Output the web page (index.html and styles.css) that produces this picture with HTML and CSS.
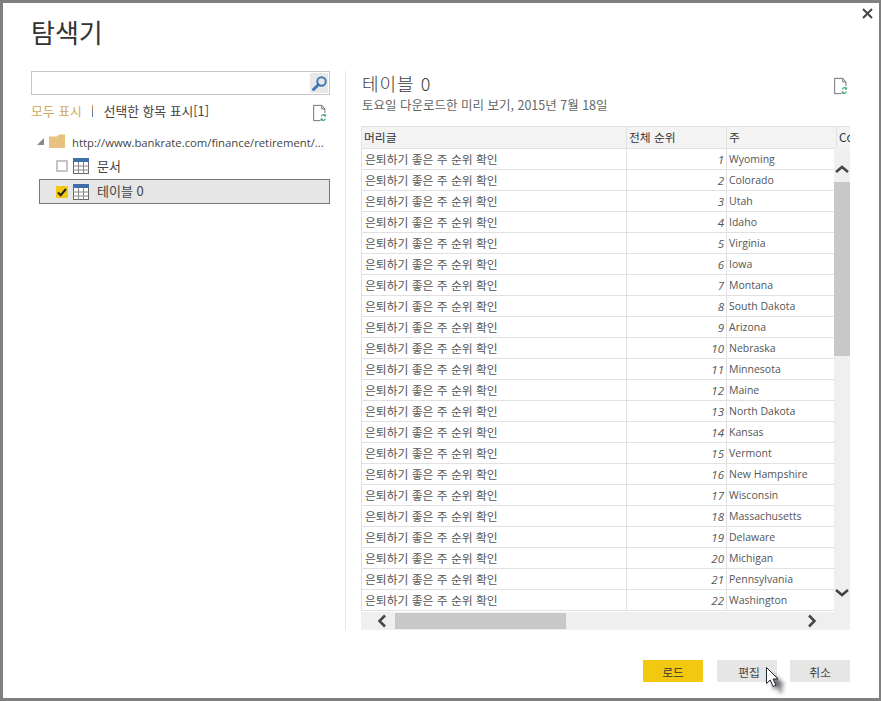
FILE: index.html
```html
<!DOCTYPE html>
<html lang="ko">
<head>
<meta charset="utf-8">
<title>탐색기</title>
<link rel="stylesheet" href="styles.css">
</head>
<body>
<div class="dialog">
  <button class="close" aria-label="닫기"><svg width="11" height="11" viewBox="0 0 11 11"><path d="M1 1l9 9M10 1l-9 9" stroke="#444" stroke-width="2" fill="none"/></svg></button>
  <h1 class="title">탐색기</h1>
  <div class="main">
    <aside class="left">
      <div class="search">
        <span class="search-btn"><svg width="17" height="17" viewBox="0 0 17 17"><circle cx="10.5" cy="6.5" r="4.2" fill="none" stroke="#3f78b5" stroke-width="2"/><path d="M7.3 9.7L2.5 14.5" stroke="#3f78b5" stroke-width="3" stroke-linecap="round"/></svg></span>
      </div>
      <div class="filter">
        <span class="f-all">모두 표시</span>
        <span class="f-sep"></span>
        <span class="f-sel">선택한 항목 표시[1]</span>
        <svg class="refresh" width="15" height="18" viewBox="0 0 16 20"><path d="M10.5 1.5H1.500V18.500H9M10.500 1.500V5.500H14V10M10.500 1.500L14 5.500" fill="none" stroke="#666" stroke-width="1"/><path d="M9.500 14a3 3 0 0 1 5-2l.8-.8v2.800h-2.800l1-1a2 2 0 0 0-3 1zM15 16a3 3 0 0 1-5 2l-.8.8V16h2.800l-1 1a2 2 0 0 0 3-1z" fill="#3d9a6a"/></svg>
      </div>
      <ul class="tree">
        <li class="node root">
          <svg class="arrow" width="7" height="7" viewBox="0 0 7 7"><path d="M7 0V7H0z" fill="#888"/></svg>
          <svg class="folder" width="16" height="14" viewBox="0 0 16 14"><path d="M0 2.500H8L10 .5H16V14H0z" fill="#e8c27f"/></svg>
          <span class="url">http://www.bankrate.com/finance/retirement/...</span>
        </li>
        <li class="node child">
          <span class="check"></span>
          <svg class="tbl" width="16" height="16" viewBox="0 0 16 16"><rect x=".5" y=".5" width="15" height="15" fill="#fff" stroke="#666"/><rect width="16" height="4" fill="#3f6fa8"/><path d="M5.500 4v12M10.500 4v12M0 8h16M0 12h16" stroke="#888"/></svg>
          <span class="label">문서</span>
        </li>
        <li class="node child selected">
          <span class="check on"><svg width="12" height="12" viewBox="0 0 12 12"><path d="M2 6.500L4.700 9.200L10 3" fill="none" stroke="#222" stroke-width="2"/></svg></span>
          <svg class="tbl" width="16" height="16" viewBox="0 0 16 16"><rect x=".5" y=".5" width="15" height="15" fill="#fff" stroke="#666"/><rect width="16" height="4" fill="#3f6fa8"/><path d="M5.500 4v12M10.500 4v12M0 8h16M0 12h16" stroke="#888"/></svg>
          <span class="label">테이블 0</span>
        </li>
      </ul>
    </aside>
    <section class="right">
      <div class="head">
        <div>
          <h2 class="t-name">테이블 0</h2>
          <p class="t-sub">토요일 다운로드한 미리 보기, 2015년 7월 18일</p>
        </div>
        <svg class="refresh" width="15" height="18" viewBox="0 0 16 20"><path d="M10.5 1.5H1.500V18.500H9M10.500 1.500V5.500H14V10M10.500 1.500L14 5.500" fill="none" stroke="#666" stroke-width="1"/><path d="M9.500 14a3 3 0 0 1 5-2l.8-.8v2.800h-2.800l1-1a2 2 0 0 0-3 1zM15 16a3 3 0 0 1-5 2l-.8.8V16h2.800l-1 1a2 2 0 0 0 3-1z" fill="#3d9a6a"/></svg>
      </div>
      <div class="grid">
        <table>
          <colgroup><col class="c1"><col class="c2"><col class="c3"><col class="c4"></colgroup>
          <thead><tr><th>머리글</th><th>전체 순위</th><th>주</th><th>Cost of living</th></tr></thead>
          <tbody>
            <tr><td>은퇴하기 좋은 주 순위 확인</td><td class="n">1</td><td>Wyoming</td><td></td></tr>
            <tr><td>은퇴하기 좋은 주 순위 확인</td><td class="n">2</td><td>Colorado</td><td></td></tr>
            <tr><td>은퇴하기 좋은 주 순위 확인</td><td class="n">3</td><td>Utah</td><td></td></tr>
            <tr><td>은퇴하기 좋은 주 순위 확인</td><td class="n">4</td><td>Idaho</td><td></td></tr>
            <tr><td>은퇴하기 좋은 주 순위 확인</td><td class="n">5</td><td>Virginia</td><td></td></tr>
            <tr><td>은퇴하기 좋은 주 순위 확인</td><td class="n">6</td><td>Iowa</td><td></td></tr>
            <tr><td>은퇴하기 좋은 주 순위 확인</td><td class="n">7</td><td>Montana</td><td></td></tr>
            <tr><td>은퇴하기 좋은 주 순위 확인</td><td class="n">8</td><td>South Dakota</td><td></td></tr>
            <tr><td>은퇴하기 좋은 주 순위 확인</td><td class="n">9</td><td>Arizona</td><td></td></tr>
            <tr><td>은퇴하기 좋은 주 순위 확인</td><td class="n">10</td><td>Nebraska</td><td></td></tr>
            <tr><td>은퇴하기 좋은 주 순위 확인</td><td class="n">11</td><td>Minnesota</td><td></td></tr>
            <tr><td>은퇴하기 좋은 주 순위 확인</td><td class="n">12</td><td>Maine</td><td></td></tr>
            <tr><td>은퇴하기 좋은 주 순위 확인</td><td class="n">13</td><td>North Dakota</td><td></td></tr>
            <tr><td>은퇴하기 좋은 주 순위 확인</td><td class="n">14</td><td>Kansas</td><td></td></tr>
            <tr><td>은퇴하기 좋은 주 순위 확인</td><td class="n">15</td><td>Vermont</td><td></td></tr>
            <tr><td>은퇴하기 좋은 주 순위 확인</td><td class="n">16</td><td>New Hampshire</td><td></td></tr>
            <tr><td>은퇴하기 좋은 주 순위 확인</td><td class="n">17</td><td>Wisconsin</td><td></td></tr>
            <tr><td>은퇴하기 좋은 주 순위 확인</td><td class="n">18</td><td>Massachusetts</td><td></td></tr>
            <tr><td>은퇴하기 좋은 주 순위 확인</td><td class="n">19</td><td>Delaware</td><td></td></tr>
            <tr><td>은퇴하기 좋은 주 순위 확인</td><td class="n">20</td><td>Michigan</td><td></td></tr>
            <tr><td>은퇴하기 좋은 주 순위 확인</td><td class="n">21</td><td>Pennsylvania</td><td></td></tr>
            <tr><td>은퇴하기 좋은 주 순위 확인</td><td class="n">22</td><td>Washington</td><td></td></tr>
          </tbody>
        </table>
        <div class="vbar">
          <svg class="v-up" width="16" height="10" viewBox="0 0 16 10"><path d="M2 8L8 3L14 8" fill="none" stroke="#444" stroke-width="2.500"/></svg>
          <span class="v-thumb"></span>
          <svg class="v-down" width="16" height="10" viewBox="0 0 16 10"><path d="M2 2L8 7L14 2" fill="none" stroke="#444" stroke-width="2.500"/></svg>
        </div>
        <div class="hbar">
          <svg class="h-left" width="10" height="14" viewBox="0 0 10 14"><path d="M8 1.500L2.500 7L8 12.500" fill="none" stroke="#444" stroke-width="2.500"/></svg>
          <span class="h-thumb"></span>
          <svg class="h-right" width="10" height="14" viewBox="0 0 10 14"><path d="M2 1.500L7.500 7L2 12.500" fill="none" stroke="#444" stroke-width="2.500"/></svg>
        </div>
      </div>
    </section>
  </div>
  <div class="footer">
    <button class="btn primary">로드</button>
    <button class="btn edit">편집</button>
    <button class="btn">취소</button>
  </div>
  <svg class="cursor" width="28" height="32" viewBox="0 0 28 32"><defs><filter id="s" x="-50%" y="-50%" width="200%" height="200%"><feGaussianBlur stdDeviation="2"/></filter></defs><path d="M5 5V21L9 17.500L12 24L15 23L12 16.500H17z" fill="#333" opacity=".75" filter="url(#s)" transform="translate(3 3)"/><path d="M1.500 1.500V17.500L5.200 14L8.200 20.500L11 19.200L8 13H13z" fill="#fff" stroke="#1a2433"/></svg>
</div>
</body>
</html>
```

FILE: styles.css
```css
* { box-sizing: border-box; }
html, body { margin: 0; padding: 0; }
body {
  width: 881px;
  height: 701px;
  overflow: hidden;
  background: #fff;
  font-family: "Noto Sans CJK KR", "Open Sans", sans-serif;
  color: #444;
}
.dialog {
  position: relative;
  width: 881px;
  height: 701px;
  border: solid #808080;
  border-width: 3px 2px 3px 3px;
  background: #fff;
  display: flex;
  flex-direction: column;
}
.close {
  position: absolute;
  top: 5px;
  right: 6px;
  width: 11px;
  height: 11px;
  padding: 0;
  border: 0;
  background: none;
  display: flex;
}
.title {
  margin: 12px 0 0 28px;
  height: 41px;
  font-size: 26px;
  line-height: 34px;
  font-weight: 400;
  color: #333;
}
.main {
  display: flex;
  margin: 15px 0 0 28px;
}
.left {
  width: 315px;
  height: 559px;
  border-right: 1px solid #e6e6e6;
  padding-right: 16px;
}
.search {
  width: 299px;
  height: 24px;
  border: 1px solid #c6c6c6;
  display: flex;
  justify-content: flex-end;
  align-items: center;
  padding-right: 1px;
}
.search-btn {
  width: 18px;
  height: 20px;
  background: #e8e8e8;
  display: flex;
  align-items: center;
  justify-content: center;
}
.filter {
  display: flex;
  align-items: center;
  height: 20px;
  margin-top: 6px;
  font-size: 12.8px;
  line-height: 20px;
}
.f-all { color: #d0a860; }
.f-sep { width: 1px; height: 12px; margin: 0 11px 0 10px; background: linear-gradient(#e08a3c, #3f78b5); }
.f-sel { color: #444; }
.filter .refresh { margin-left: auto; margin-right: 2px; margin-top: 4px; }
.tree { list-style: none; margin: 8px 0 0; padding: 0; font-size: 12px; }
.node { display: flex; align-items: center; }
.node svg, .check { flex: none; }
.root { height: 24px; padding-left: 6px; }
.arrow { margin-right: 5px; }
.folder { margin-right: 7px; }
.url { color: #444; white-space: nowrap; font-family: "Open Sans", sans-serif; font-size: 11.3px; padding-top: 2px; }
.child { height: 25px; padding-left: 25px; }
.check {
  width: 12px;
  height: 12px;
  border: 2px solid #c6c6c6;
  background: #fff;
  margin-right: 5px;
  display: flex;
  align-items: center;
  justify-content: center;
}
.check.on { border: 0; background: #f2c811; }
.label { margin-left: 8px; font-size: 13px; line-height: 18px; }
.selected {
  margin-top: 1px;
  margin-left: 8px;
  padding-left: 17px;
  width: 291px;
  background: #e6e6e6;
  border: 1px solid #777;
}
.selected .check { margin-left: -1px; }
.selected .label { padding-bottom: 2px; }
.right {
  width: 504px;
  padding-left: 16px;
  height: 559px;
  display: flex;
  flex-direction: column;
  position: relative;
}
.head { display: flex; justify-content: space-between; align-items: flex-start; }
.head .refresh { margin-top: 6px; margin-right: 2px; }
.t-name {
  margin: -1px 0 0;
  height: 26px;
  font-size: 18px;
  line-height: 26px;
  font-weight: 300;
  color: #3c3c3c;
  letter-spacing: 1px;
}
.t-sub {
  margin: 0;
  height: 18px;
  font-size: 12.5px;
  line-height: 18px;
  color: #666;
}
.grid {
  position: relative;
  margin: 12px 0 0 -1px;
  width: 489px;
  height: 504px;
  overflow: hidden;
}
table {
  border-collapse: collapse;
  table-layout: fixed;
  width: 600px;
  font-size: 11.8px;
}
.c1 { width: 265px; }
.c2 { width: 100px; }
.c3 { width: 110px; }
.c4 { width: 125px; }
th {
  height: 22px;
  padding: 0 2px 2px;
  background: #f3f3f3;
  border: 1px solid #e1e1e1;
  font-weight: 400;
  text-align: left;
  color: #333;
  white-space: nowrap;
  overflow: hidden;
}
td {
  height: 21px;
  padding: 0 3px;
  border: 1px solid #e1e1e1;
  color: #555;
  white-space: nowrap;
  overflow: hidden;
}
td:first-child { padding-bottom: 2px; }
td.n { text-align: right; font-style: italic; font-family: "Open Sans", sans-serif; font-size: 11.5px; padding-right: 2px; }
td:nth-child(3) { font-family: "Open Sans", sans-serif; font-size: 10.5px; padding-left: 2px; }
.vbar {
  position: absolute;
  top: 22px;
  right: 0;
  width: 16px;
  bottom: 18px;
  background: #efefef;
}
.v-up { position: absolute; top: 16px; left: 0; }
.v-thumb { position: absolute; top: 34px; left: 0; width: 16px; height: 174px; background: #c8c8c8; }
.v-down { position: absolute; bottom: 14px; left: 0; }
.hbar {
  position: absolute;
  left: 0;
  right: 0;
  bottom: 0;
  height: 18px;
  background: #efefef;
}
.h-left { position: absolute; top: 2px; left: 16px; }
.h-thumb { position: absolute; top: 1px; left: 34px; width: 171px; height: 16px; background: #c8c8c8; }
.h-right { position: absolute; top: 2px; right: 33px; }
.footer {
  display: flex;
  justify-content: flex-end;
  gap: 13px;
  margin: 30px 29px 0 0;
}
.btn {
  width: 60px;
  height: 22px;
  padding: 0;
  border: 0;
  background: #e6e6e6;
  color: #444;
  font-family: inherit;
  font-size: 11.8px;
}
.btn.primary { background: #f2c811; color: #333; margin-right: 1px; }
.btn.edit { padding-left: 4px; }
.cursor { position: absolute; left: 762px; top: 663px; }
```
